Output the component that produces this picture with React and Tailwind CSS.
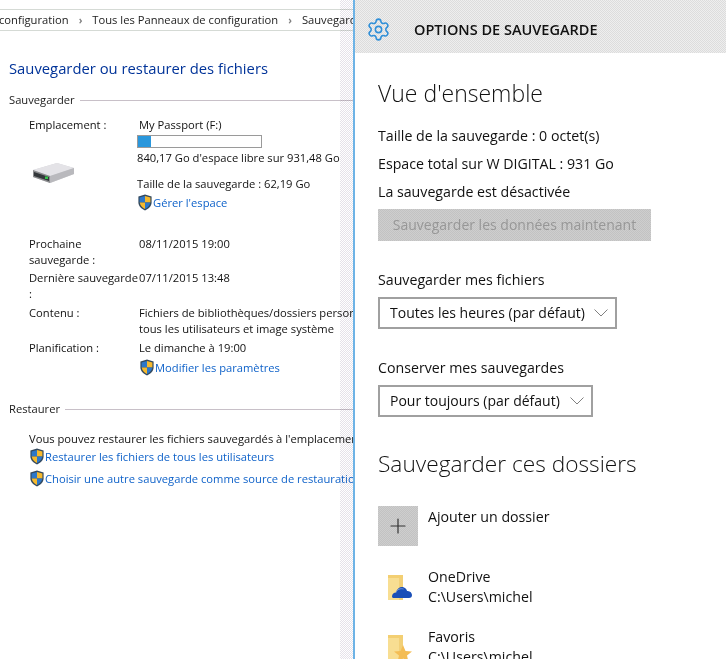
import { Plus, Settings } from "lucide-react";

function Shield() {
  return (
    <svg width="16" height="17" viewBox="0 0 16 17" className="shrink-0">
      <path d="M8 .5 14.6 2.600V8.500C14.600 12 11.500 15 8 16.500 4.500 15 1.400 12 1.400 8.500V2.600Z" fill="#33495e" />
      <path d="M8 2 2.600 3.600V8.400H8Z" fill="#2c77c9" />
      <path d="M8 2 13.400 3.600V8.400H8Z" fill="#f6b92c" />
      <path d="M2.700 8.400H8V15C5.500 13.800 3.200 11.400 2.700 8.400Z" fill="#f6b92c" />
      <path d="M13.300 8.400H8V15C10.500 13.800 12.800 11.400 13.300 8.400Z" fill="#2c77c9" />
    </svg>
  );
}

function DriveIcon() {
  return (
    <svg width="43" height="22" viewBox="0 0 43 22">
      <path d="M1 8 25 1 42 6 42 12 18 21 1 15Z" fill="#d2d2d6" />
      <path d="M1 8 25 1 42 6 18 14Z" fill="#e4e3e7" />
      <path d="M18 14 42 6V12L18 21Z" fill="#b9b9bd" />
      <path d="M1 8 18 14V21L1 15Z" fill="#8b8c8e" />
      <path d="M2 10 17 15V19L2 14Z" fill="#33373a" />
      <path d="M13 14.500h3v2.500h-3z" fill="#35c24a" />
    </svg>
  );
}

function FolderIcon({ star }) {
  return (
    <svg width="26" height="28" viewBox="0 0 26 28">
      <path d="M1 1H16V26H1Z" fill="#f8de92" />
      <path d="M1 1H16V4H1Z" fill="#f3cf72" />
      <path d="M12 4H16V26H12Z" fill="#f2d078" />
      {star ? (
        <path d="M16 11 18.500 17 25 17.500 20 21.500 21.500 28 16 24.500 10.500 28 12 21.500 7 17.500 13.500 17Z" fill="#f4bd55" />
      ) : (
        <>
          <path d="M5 22.500C5 20 7 18.500 9 18.500 10 14 14 12 17 13.500 19 14.500 20 16 20 17 23 16.500 25 19 25 21 25 23 24 24 22 24H7C6 24 5 23.500 5 22.500Z" fill="#1a4fb8" />
          <path d="M9 18.500C10 15.500 13.500 14 16.500 15" fill="none" stroke="#6f93d8" />
        </>
      )}
    </svg>
  );
}

function SectionTitle({ children }) {
  return (
    <div className="flex items-center gap-[5px] pl-[9px] leading-4 text-[#1a1a1a]">
      <span>{children}</span>
      <div className="h-px flex-1 bg-[#c8c0c8]" />
    </div>
  );
}

function Row({ label, children, className }) {
  return (
    <div className={`grid grid-cols-[110px_1fr] pl-[29px] ${className}`}>
      <div className="whitespace-nowrap">{label}</div>
      <div className="whitespace-nowrap">{children}</div>
    </div>
  );
}

function LinkRow({ children, className }) {
  return (
    <div className={`flex items-center whitespace-nowrap text-[#0f62c9] ${className}`}>
      <Shield />
      <span>{children}</span>
    </div>
  );
}

function Select({ children, width }) {
  return (
    <div className={`mt-[7px] flex h-8 items-center justify-between border-2 border-[#a0a0a0] pl-[10px] pr-[7px] text-[14px] ${width}`}>
      <span>{children}</span>
      <svg width="14" height="8" viewBox="0 0 14 8" fill="none" stroke="#808080">
        <path d="M.5.500 7 7 13.500.500" />
      </svg>
    </div>
  );
}

function FolderRow({ name, star, className }) {
  return (
    <div className={`flex ${className}`}>
      <div className="w-[50px] pl-[9px] pt-[7px]">
        <FolderIcon star={star} />
      </div>
      <div className="leading-5">
        <div>{name}</div>
        <div>C:\Users\michel</div>
      </div>
    </div>
  );
}

export default function App() {
  return (
    <div className="flex h-[659px] w-[726px] overflow-hidden bg-white font-['Open_Sans',sans-serif] text-[#111111]">
      {/* Control panel behind */}
      <div className="relative w-[353px] shrink-0 overflow-hidden text-[11.2px] leading-4">
        <div className="mt-[9px] flex h-[22px] items-center whitespace-nowrap border-y border-[#d5dad5] text-[#222222]">
          <span className="ml-[-1px]">configuration</span>
          <span className="mx-[10px] text-[10px] font-bold text-[#808080]">›</span>
          <span>Tous les Panneaux de configuration</span>
          <span className="mx-[10px] text-[10px] font-bold text-[#808080]">›</span>
          <span>Sauvegarder</span>
        </div>

        <h1 className="mt-[27px] whitespace-nowrap pl-[9px] text-[14.8px] font-normal leading-5 text-[#003399]">
          Sauvegarder ou restaurer des fichiers
        </h1>

        <div className="mt-[14px]">
          <SectionTitle>Sauvegarder</SectionTitle>
        </div>

        <Row
          className="mt-[9px]"
          label={
            <>
              <div>Emplacement :</div>
              <div className="mt-[29px] pl-[3px]">
                <DriveIcon />
              </div>
            </>
          }
        >
          <div>My Passport (F:)</div>
          <div className="ml-[-2px] mt-[2px] h-[13px] w-[125px] border border-[#9a9a9a] bg-white">
            <div className="h-full w-[13px] bg-[#2a97dc]" />
          </div>
          <div className="ml-[-2px] mt-[2px]">840,17 Go d'espace libre sur 931,48 Go</div>
          <div className="ml-[-2px] mt-[10px]">Taille de la sauvegarde : 62,19 Go</div>
          <LinkRow className="ml-[-2px] mt-[2px]">Gérer l'espace</LinkRow>
        </Row>

        <Row className="mt-[25px]" label={<>Prochaine<br />sauvegarde :</>}>
          08/11/2015 19:00
        </Row>
        <Row className="mt-[2px]" label={<>Dernière sauvegarde<br />:</>}>
          07/11/2015 13:48
        </Row>
        <Row className="mt-[3px]" label="Contenu :">
          <div>Fichiers de bibliothèques/dossiers personnels de</div>
          <div>tous les utilisateurs et image système</div>
        </Row>
        <Row className="mt-[3px]" label="Planification :">
          <div>Le dimanche à 19:00</div>
          <LinkRow className="mt-[3px]">Modifier les paramètres</LinkRow>
        </Row>

        <div className="mt-[25px]">
          <SectionTitle>Restaurer</SectionTitle>
        </div>

        <div className="mt-[14px] whitespace-nowrap pl-[29px]">
          <div>Vous pouvez restaurer les fichiers sauvegardés à l'emplacement</div>
          <LinkRow className="mt-[1px]">Restaurer les fichiers de tous les utilisateurs</LinkRow>
          <LinkRow className="mt-[5px]">Choisir une autre sauvegarde comme source de restauration</LinkRow>
        </div>

        {/* dithered shadow of the flyout */}
        <div className="absolute inset-y-0 right-0 w-[13px] bg-[repeating-conic-gradient(#e6e2ea_0_25%,#ffffff_0_50%)] bg-[length:2px_2px] mix-blend-multiply" />
      </div>

      {/* Flyout */}
      <div className="flex-1 border-l-2 border-[#6db3e6] text-[14.2px] leading-5">
        <div className="flex h-[53px] items-center bg-[repeating-conic-gradient(#dcdcdc_0_25%,#eeeeee_0_50%)] bg-[length:2px_2px] pl-[11px] pt-[6px]">
          <Settings size={25} strokeWidth={1.5} className="text-[#2f8fd8]" />
          <span className="ml-[23px] text-[14.5px] font-semibold">OPTIONS DE SAUVEGARDE</span>
        </div>

        <div className="pl-[23px]">
          <h2 className="mt-[24px] text-[23px] font-light leading-8">Vue d'ensemble</h2>
          <p className="mt-[17px]">Taille de la sauvegarde : 0 octet(s)</p>
          <p className="mt-2">Espace total sur W DIGITAL : 931 Go</p>
          <p className="mt-2">La sauvegarde est désactivée</p>
          <div className="mt-[7px] flex h-8 w-[273px] items-center justify-center bg-[repeating-conic-gradient(#c2c2c2_0_25%,#cecece_0_50%)] bg-[length:2px_2px] text-[14px] text-[#979797]">
            Sauvegarder les données maintenant
          </div>

          <p className="mt-[29px]">Sauvegarder mes fichiers</p>
          <Select width="w-[239px]">Toutes les heures (par défaut)</Select>

          <p className="mt-[29px]">Conserver mes sauvegardes</p>
          <Select width="w-[215px]">Pour toujours (par défaut)</Select>

          <h2 className="mt-[31px] text-[22.7px] font-light leading-8">Sauvegarder ces dossiers</h2>

          <div className="mt-[26px] flex">
            <div className="flex h-10 w-10 items-center justify-center bg-[repeating-conic-gradient(#c2c2c2_0_25%,#cecece_0_50%)] bg-[length:2px_2px]">
              <Plus size={24} strokeWidth={1.2} className="text-[#333333]" />
            </div>
            <span className="ml-[10px] mt-[1px]">Ajouter un dossier</span>
          </div>

          <FolderRow name="OneDrive" className="mt-[21px]" />
          <FolderRow name="Favoris" star className="mt-5" />
        </div>
      </div>
    </div>
  );
}
